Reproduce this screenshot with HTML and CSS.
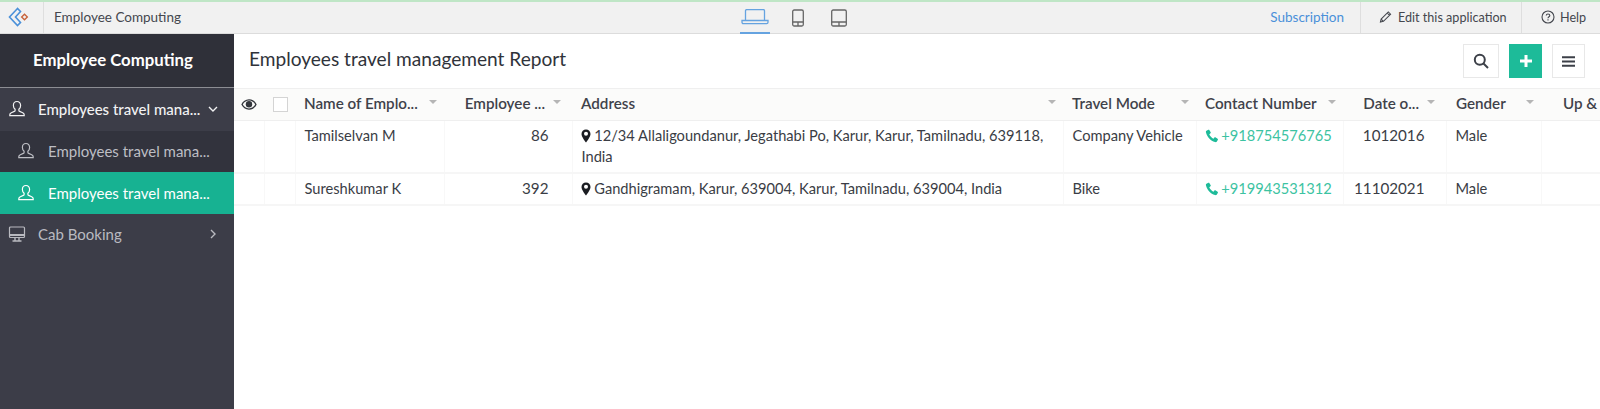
FILE: index.html
```html
<!DOCTYPE html>
<html lang="en">
<head>
    <meta charset="UTF-8">
    <title>Employees travel management Report</title>
    <link rel="stylesheet" href="styles.css">
</head>
<body>
    <svg class="defs" width="0" height="0">
        <symbol id="user" viewBox="0 0 18 18">
            <path d="M9 1.500c-2.200 0-3.600 1.700-3.600 3.900 0 1.600.7 3 1.700 3.800v1.200c0 .5-.3.8-.8 1l-3 1.300c-.9.4-1.500 1.100-1.500 2.100v.9h14.400v-.9c0-1-.6-1.700-1.500-2.100l-3-1.300c-.5-.2-.8-.5-.8-1V9.200c1-.8 1.700-2.200 1.700-3.800 0-2.200-1.400-3.900-3.600-3.900z" fill="none" stroke="currentColor" stroke-width="1.200"/>
        </symbol>
        <symbol id="pin" viewBox="0 0 10 14">
            <path fill-rule="evenodd" d="M5 .5C2.400.5.500 2.400.500 4.900c0 2.800 3 6.400 4.500 8.600 1.500-2.200 4.500-5.800 4.500-8.600C9.500 2.400 7.600.5 5 .5zm0 6.300a2 2 0 1 1 0-4 2 2 0 0 1 0 4z" fill="currentColor"/>
        </symbol>
        <symbol id="phone" viewBox="0 0 14 14">
            <path d="M3.300.8 1.500 1.700C.9 2 .8 2.800 1 3.600c1.200 4.500 4.600 8.300 9 9.500.8.200 1.500 0 1.900-.6l1-1.700c.2-.4.100-.8-.3-1L10.400 8.300c-.4-.2-.8-.1-1 .2l-.9 1.200c-1.900-.9-3.400-2.600-4.200-4.500l1.200-1c.3-.2.4-.6.2-1L4.300 1c-.2-.4-.6-.4-1-.2z" fill="currentColor"/>
        </symbol>
    </svg>

    <div class="topbar">
        <div class="logo-cell">
            <svg width="22" height="22" viewBox="0 0 22 22" fill="none">
                <path d="M9.500 1.500 1.500 10l8 8.500 3-3-5-5.500 5-5.500z" stroke="#4a90d9" stroke-width="1.600"/>
                <rect x="14.500" y="8" width="4" height="4" transform="rotate(45 16.500 10)" stroke="#c8643c" stroke-width="1.400"/>
            </svg>
        </div>
        <div class="app-name">Employee Computing</div>
        <div class="devices">
            <div class="device device-active">
                <svg width="28" height="16" viewBox="0 0 28 16" fill="none" stroke="currentColor" stroke-width="1.300">
                    <path d="M4.500 11.500V1.800c0-.7.500-1.200 1.200-1.200h16.600c.7 0 1.200.5 1.200 1.200v9.700"/>
                    <path d="M1 11.500h26v1.800c0 .8-.5 1.300-1.300 1.300H2.300c-.8 0-1.300-.5-1.300-1.300z"/>
                </svg>
            </div>
            <div class="device">
                <svg width="14" height="18" viewBox="0 0 14 18" fill="none" stroke="currentColor" stroke-width="1.300">
                    <rect x="1.700" y="1" width="10.600" height="16" rx="1.500"/>
                    <path d="M1.700 13h10.600M7 13v4"/>
                </svg>
            </div>
            <div class="device device-tablet">
                <svg width="18" height="18" viewBox="0 0 18 18" fill="none" stroke="currentColor" stroke-width="1.300">
                    <rect x="1.700" y="1" width="14.600" height="16" rx="1.500"/>
                    <path d="M1.700 13h14.600M9 13v4"/>
                </svg>
            </div>
        </div>
        <a class="subscription">Subscription</a>
        <div class="top-action top-edit">
            <svg width="13" height="14" viewBox="0 0 14 14" fill="none" stroke="currentColor" stroke-width="1.100">
                <path d="M1.500 12.500l.8-3.300L10 1.500l2.500 2.500-7.700 7.700zM2.300 9.200l2.500 2.500M8.800 2.700l2.500 2.500"/>
            </svg>
            Edit this application
        </div>
        <div class="top-action top-help">
            <svg width="14" height="14" viewBox="0 0 14 14" fill="none" stroke="currentColor" stroke-width="1.100">
                <circle cx="7" cy="7" r="6"/>
                <path d="M5.200 5.500C5.300 4.500 6 4 7 4s1.800.6 1.800 1.500C8.800 6.800 7 6.800 7 8.300"/>
                <path d="M7 9.300v1.200"/>
            </svg>
            Help
        </div>
    </div>

    <div class="main">
        <div class="sidebar">
            <div class="side-title">Employee Computing</div>
            <div class="side-item side-open">
                <svg class="side-icon" width="18" height="18"><use href="#user"/></svg>
                <span class="side-label">Employees travel mana...</span>
                <svg class="side-arrow" width="10" height="10" viewBox="0 0 10 10" fill="none" stroke="currentColor" stroke-width="1.400"><path d="M1 3 5 7l4-4"/></svg>
            </div>
            <div class="side-sub">
                <svg class="side-icon" width="18" height="18"><use href="#user"/></svg>
                <span class="side-label">Employees travel mana...</span>
            </div>
            <div class="side-sub side-active">
                <svg class="side-icon" width="18" height="18"><use href="#user"/></svg>
                <span class="side-label">Employees travel mana...</span>
            </div>
            <div class="side-item side-cab">
                <svg class="side-icon" width="18" height="18" viewBox="0 0 18 18" fill="none" stroke="currentColor" stroke-width="1.200">
                    <rect x="1.500" y="2" width="15" height="10.500" rx="1"/>
                    <path d="M1.500 10h15" stroke-width="2"/>
                    <path d="M7 12.500v3M11 12.500v3M4.500 16h9" stroke-width="1.400"/>
                </svg>
                <span class="side-label">Cab Booking</span>
                <svg class="side-arrow" width="10" height="10" viewBox="0 0 10 10" fill="none" stroke="currentColor" stroke-width="1.400"><path d="M3 1l4 4-4 4"/></svg>
            </div>
        </div>

        <div class="content">
            <div class="report-head">
                <h1>Employees travel management Report</h1>
                <div class="report-actions">
                    <div class="icon-btn">
                        <svg width="16" height="16" viewBox="0 0 16 16" fill="none" stroke="#3c4048" stroke-width="2">
                            <circle cx="6.800" cy="6.800" r="5"/>
                            <path d="M10.500 10.500 15 15"/>
                        </svg>
                    </div>
                    <div class="icon-btn btn-add">
                        <svg width="12" height="12" viewBox="0 0 12 12" fill="none" stroke="#fff" stroke-width="3"><path d="M6 0v12M0 6h12"/></svg>
                    </div>
                    <div class="icon-btn btn-menu">
                        <svg width="13" height="11" viewBox="0 0 12 10" fill="none" stroke="#3c4048" stroke-width="1.800"><path d="M0 1h12M0 5h12M0 9h12"/></svg>
                    </div>
                </div>
            </div>

            <table class="report">
                <colgroup>
                    <col class="c-eye"><col class="c-check"><col class="c-name"><col class="c-id"><col class="c-address"><col class="c-mode"><col class="c-contact"><col class="c-date"><col class="c-gender"><col class="c-up">
                </colgroup>
                <thead>
                    <tr>
                        <th class="cell-eye">
                            <svg width="16" height="11" viewBox="0 0 16 11"><path fill-rule="evenodd" d="M8 .3C4.500.3 1.800 2.500.3 5.500 1.800 8.500 4.500 10.700 8 10.700s6.200-2.200 7.700-5.200C14.200 2.500 11.500.3 8 .3zm0 1.300c2.800 0 5 1.700 6.200 3.900-1.200 2.200-3.400 3.900-6.200 3.900S3 7.700 1.800 5.500C3 3.300 5.200 1.600 8 1.600z" fill="#33363c"/><circle cx="8" cy="5.300" r="3.200" fill="#33363c"/></svg>
                        </th>
                        <th class="cell-check"><span class="checkbox"></span></th>
                        <th><div class="th-in"><span>Name of Emplo...</span><i class="sort"></i></div></th>
                        <th class="th-right"><div class="th-in"><span>Employee ...</span><i class="sort"></i></div></th>
                        <th><div class="th-in"><span>Address</span><i class="sort"></i></div></th>
                        <th><div class="th-in"><span>Travel Mode</span><i class="sort"></i></div></th>
                        <th><div class="th-in"><span>Contact Number</span><i class="sort"></i></div></th>
                        <th class="th-right"><div class="th-in"><span>Date o...</span><i class="sort"></i></div></th>
                        <th class="th-gender"><div class="th-in"><span>Gender</span><i class="sort"></i></div></th>
                        <th class="th-up"><div class="th-in"><span>Up &amp;</span></div></th>
                    </tr>
                </thead>
                <tbody>
                    <tr>
                        <td></td>
                        <td></td>
                        <td>Tamilselvan M</td>
                        <td class="num">86</td>
                        <td><svg class="pin" width="10" height="14"><use href="#pin"/></svg> 12/34 Allaligoundanur, Jegathabi Po, Karur, Karur, Tamilnadu, 639118, India</td>
                        <td>Company Vehicle</td>
                        <td class="phone"><svg width="14" height="14"><use href="#phone"/></svg> +918754576765</td>
                        <td class="num num-date">1012016</td>
                        <td>Male</td>
                        <td></td>
                    </tr>
                    <tr>
                        <td></td>
                        <td></td>
                        <td>Sureshkumar K</td>
                        <td class="num">392</td>
                        <td><svg class="pin" width="10" height="14"><use href="#pin"/></svg> Gandhigramam, Karur, 639004, Karur, Tamilnadu, 639004, India</td>
                        <td>Bike</td>
                        <td class="phone"><svg width="14" height="14"><use href="#phone"/></svg> +919943531312</td>
                        <td class="num num-date">11102021</td>
                        <td>Male</td>
                        <td></td>
                    </tr>
                </tbody>
            </table>
        </div>
    </div>
</body>
</html>
```

FILE: styles.css
```css
* {
    margin: 0;
    padding: 0;
    box-sizing: border-box;
}

html, body {
    height: 100%;
    overflow: hidden;
}

body {
    font-family: Lato, "Open Sans", sans-serif;
    font-size: 14.65px;
    color: #3a3d45;
    background: white;
    display: flex;
    flex-direction: column;
}

.defs {
    display: none;
}

/* top bar */
.topbar {
    height: 34px;
    flex: none;
    display: flex;
    align-items: stretch;
    background: #f1f1f1;
    border-top: 2px solid #bfe6c6;
    border-bottom: 1px solid #dcdcdc;
    font-size: 13.5px;
    position: relative;
}

.logo-cell {
    width: 44px;
    padding-right: 6px;
    display: flex;
    align-items: center;
    justify-content: center;
    border-right: 1px solid #dedede;
}

.app-name {
    padding: 0 0 1px 10px;
    display: flex;
    align-items: center;
    color: #44474e;
}

.devices {
    position: absolute;
    top: 0;
    bottom: -1px;
    left: 740px;
    display: flex;
    gap: 21px;
}

.device {
    display: flex;
    align-items: center;
    justify-content: center;
    color: #666;
}

.device-active {
    width: 30px;
    color: #65a3e0;
    border-bottom: 2px solid #65a3e0;
}

.device-tablet {
    margin-left: 4px;
}

.subscription {
    margin-left: auto;
    padding: 0 16px 1px 0;
    display: flex;
    align-items: center;
    color: #4a90d9;
}

.top-action {
    display: flex;
    align-items: center;
    border-left: 1px solid #dedede;
    color: #44474e;
    font-size: 12.6px;
    padding-bottom: 1px;
}

.top-edit {
    width: 161px;
    padding-left: 18px;
    gap: 6px;
}

.top-help {
    width: 79px;
    padding-left: 19px;
    gap: 5px;
}

.main {
    flex: 1;
    display: flex;
    min-height: 0;
}

/* sidebar */
.sidebar {
    width: 234px;
    flex: none;
    background: #3c3d48;
    color: #e4e4e6;
}

.side-title {
    height: 54px;
    padding: 0 8px 2px 0;
    display: flex;
    align-items: center;
    justify-content: center;
    background: #2f3039;
    border-bottom: 1px solid #8c8d93;
    color: white;
    font-size: 16.8px;
    font-weight: 700;
}

.side-item, .side-sub {
    display: flex;
    align-items: center;
    font-size: 15px;
    padding-bottom: 1px;
}

.side-item {
    height: 43px;
    padding-left: 8px;
}

.side-open {
    color: #f2f2f3;
    font-weight: 500;
}

.side-cab {
    color: #b9bac0;
    padding-bottom: 3px;
}

.side-sub {
    height: 41px;
    padding-left: 17px;
    background: #32333d;
    color: #bdbec4;
}

.side-active {
    height: 42px;
    background: #17b292;
    color: white;
}

.side-icon {
    flex: none;
    margin-right: 12px;
}

.side-sub .side-icon {
    margin-right: 13px;
}

.side-arrow {
    margin-left: auto;
    margin-right: 16px;
}

/* report */
.content {
    flex: 1;
    min-width: 0;
    overflow: hidden;
}

.report-head {
    height: 54px;
    display: flex;
    align-items: center;
    justify-content: space-between;
    padding: 0 15px;
}

.report-head h1 {
    font-size: 19.1px;
    font-weight: 400;
    color: #30333a;
    margin-bottom: 6px;
}

.report-actions {
    display: flex;
    gap: 10px;
}

.icon-btn {
    width: 36px;
    height: 34px;
    display: flex;
    align-items: center;
    justify-content: center;
    border: 1px solid #e8e8e8;
}

.btn-add {
    width: 33px;
    background: #1dbb99;
    border: none;
}

.btn-menu {
    width: 33px;
}

.report {
    width: 1366px;
    table-layout: fixed;
    border-collapse: collapse;
}

.c-eye { width: 30px; }
.c-check { width: 31px; }
.c-name { width: 149px; }
.c-id { width: 128px; }
.c-address { width: 491px; }
.c-mode { width: 133px; }
.c-contact { width: 147px; }
.c-date { width: 103px; }
.c-gender { width: 95px; }
.c-up { width: 59px; }

th {
    height: 32px;
    background: #fbfbfa;
    border-top: 1px solid #efefef;
    border-bottom: 1px solid #efefef;
    text-align: left;
    font-size: 15.2px;
    font-weight: 600;
    padding: 0 7px 3px 9px;
    color: #3f424a;
    white-space: nowrap;
}

.cell-eye, .cell-check {
    padding: 0;
    text-align: center;
}

.cell-check {
    padding-left: 2px;
}

.cell-eye svg {
    display: block;
    margin: 0 auto;
}

.checkbox {
    display: block;
    width: 15px;
    height: 15px;
    margin: 0 auto;
    background: white;
    border: 1px solid #d4d4d4;
}

.th-in {
    display: flex;
    align-items: center;
    justify-content: space-between;
}

.th-right {
    padding-right: 11px;
}

.th-right .th-in {
    justify-content: flex-end;
    gap: 8px;
}

.th-gender {
    padding-left: 10px;
}

.th-up {
    padding-left: 22px;
}

.sort {
    flex: none;
    width: 0;
    height: 0;
    border-left: 4px solid transparent;
    border-right: 4px solid transparent;
    border-top: 4px solid #b5b5b5;
    margin-bottom: 3px;
}

td {
    padding: 4px 8px 5px 9px;
    line-height: 21px;
    vertical-align: top;
    border-bottom: 2px solid #f6f6f6;
    border-right: 1px solid #f8f8f8;
}

td.num {
    font-size: 15.2px;
    text-align: right;
    padding-right: 23px;
}

td.num-date {
    padding-right: 21px;
}

.pin {
    vertical-align: -2px;
    margin-left: -1px;
    color: #1b1d22;
}

.phone {
    color: #3cc3a2;
}

.phone svg {
    vertical-align: -2px;
    margin: 0 -1px 0 -1px;
    color: #1dbb99;
}
```
